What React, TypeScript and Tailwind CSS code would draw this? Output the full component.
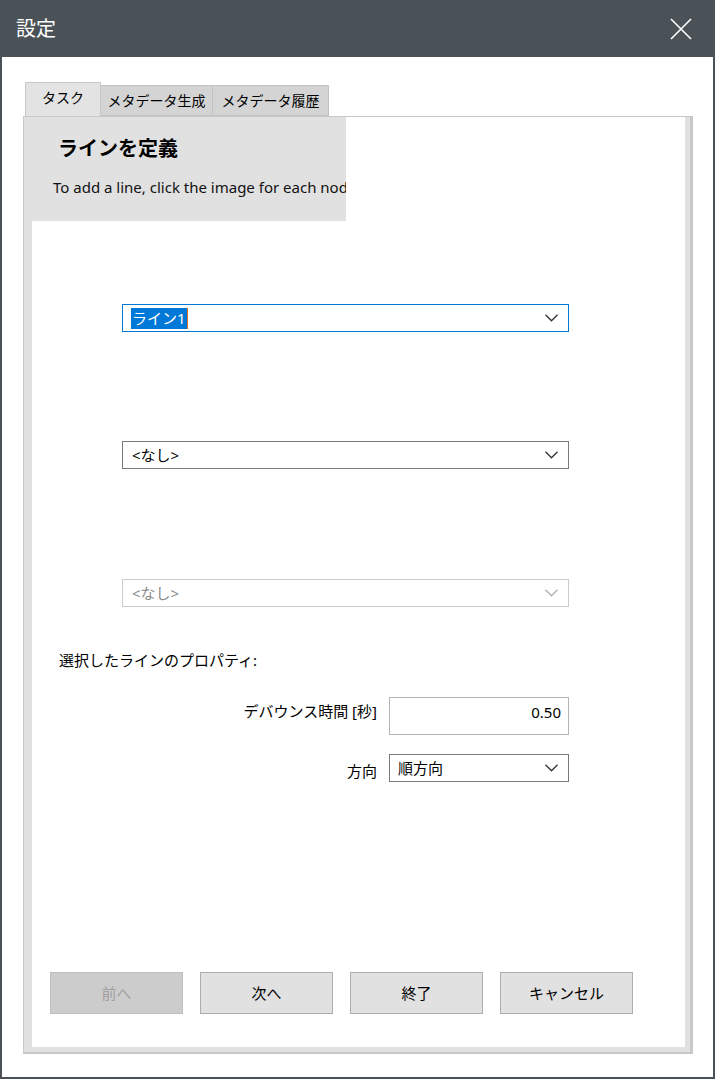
import React from "react";

const JP = { fontFamily: '"Noto Sans", "Noto Sans CJK JP", sans-serif' };

function Chevron({ color = "#333" }: { color?: string }) {
  return (
    <svg width="13" height="8" viewBox="0 0 13 8" className="shrink-0">
      <path d="M0.5 0.8 L6.5 6.8 L12.5 0.8" fill="none" stroke={color} strokeWidth="1.3" />
    </svg>
  );
}

export default function App() {
  return (
    <div
      className="w-[715px] h-[1079px] flex flex-col bg-white border-x-2 border-b-2 border-[#4a5258] text-black overflow-hidden"
      style={JP}
    >
      {/* Title bar */}
      <div className="h-[57px] shrink-0 bg-[#4a5258] flex items-center justify-between pl-[14px] pr-[21px]">
        <span className="text-white text-[20px] leading-none">設定</span>
        <svg width="22" height="22" viewBox="0 0 22 22">
          <path d="M1 1 L21 21 M21 1 L1 21" stroke="#ffffff" strokeWidth="1.6" />
        </svg>
      </div>

      {/* Tabs */}
      <div className="mt-[25px] ml-[23px] flex items-end h-[34px] shrink-0 relative z-10">
        <div className="w-[76px] h-[34px] bg-[#e3e3e3] border border-b-0 border-[#c8c8c8] flex items-center justify-center text-[14px] pb-[4px]">
          タスク
        </div>
        <div className="w-[112px] h-[31px] bg-[#d4d4d4] border border-l-0 border-[#c2c2c2] flex items-center justify-center text-[14px]">
          メタデータ生成
        </div>
        <div className="w-[116px] h-[31px] bg-[#d4d4d4] border border-l-0 border-[#c2c2c2] flex items-center justify-center text-[14px]">
          メタデータ履歴
        </div>
      </div>

      {/* Panel */}
      <div className="ml-[21px] w-[670px] h-[938px] shrink-0 border-l border-t border-r-[3px] border-b-2 border-[#c8c8c8] bg-[#e1e1e1] pl-[8px] pr-[5px] pb-[5px] flex flex-col">
        <div className="flex-1 bg-white flex flex-col">
          {/* Header */}
          <div className="-ml-[8px] w-[322px] h-[104px] bg-[#e1e1e1] overflow-hidden pt-[18px] shrink-0">
            <div className="pl-[34px] text-[20px] leading-[28px] font-bold whitespace-nowrap">ラインを定義</div>
            <div className="pl-[29px] mt-[14px] text-[15px] leading-[20px] whitespace-nowrap text-[#111]">
              To add a line, click the image for each node in order.
            </div>
          </div>

          {/* Dropdown 1 (focused) */}
          <div className="mt-[83px] ml-[90px] w-[447px] h-[28px] border border-[#0078d7] flex items-center justify-between pl-[8px] pr-[10px]">
            <span className="bg-[#0078d7] text-white text-[15px] leading-[21px] h-[21px] px-[1px] border-r border-[#e07020]">
              ライン1
            </span>
            <Chevron />
          </div>

          {/* Dropdown 2 */}
          <div className="mt-[109px] ml-[90px] w-[447px] h-[28px] border border-[#7a7a7a] flex items-center justify-between pl-[9px] pr-[10px]">
            <span className="text-[15px] leading-[21px]">&lt;なし&gt;</span>
            <Chevron />
          </div>

          {/* Dropdown 3 (disabled) */}
          <div className="mt-[110px] ml-[90px] w-[447px] h-[28px] border border-[#cccccc] flex items-center justify-between pl-[9px] pr-[10px]">
            <span className="text-[15px] leading-[21px] text-[#8a8a8a]">&lt;なし&gt;</span>
            <Chevron color="#b0b0b0" />
          </div>

          {/* Properties label */}
          <div className="mt-[43px] ml-[27px] text-[15px] leading-[20px]">選択したラインのプロパティ:</div>

          {/* Debounce row */}
          <div className="mt-[27px] flex items-start">
            <div className="w-[345px] text-right text-[15px] leading-[20px] pt-[4px]">デバウンス時間 [秒]</div>
            <div className="ml-[12px] w-[180px] h-[38px] border border-[#b4b4b4] flex items-start justify-end pr-[7px] pt-[4px] text-[15px] leading-[20px]">
              0.50
            </div>
          </div>

          {/* Direction row */}
          <div className="mt-[19px] flex items-start">
            <div className="w-[345px] text-right text-[15px] leading-[20px] pt-[7px]">方向</div>
            <div className="ml-[12px] w-[180px] h-[28px] border border-[#7a7a7a] flex items-center justify-between pl-[8px] pr-[10px]">
              <span className="text-[15px] leading-[21px]">順方向</span>
              <Chevron />
            </div>
          </div>

          {/* Buttons */}
          <div className="mt-auto mb-[33px] ml-[18px] flex gap-[17px]">
            <div className="w-[133px] h-[42px] bg-[#cccccc] border border-[#bfbfbf] flex items-center justify-center text-[15px] text-[#a0a0a0]">
              前へ
            </div>
            <div className="w-[133px] h-[42px] bg-[#e1e1e1] border border-[#adadad] flex items-center justify-center text-[15px]">
              次へ
            </div>
            <div className="w-[133px] h-[42px] bg-[#e1e1e1] border border-[#adadad] flex items-center justify-center text-[15px]">
              終了
            </div>
            <div className="w-[133px] h-[42px] bg-[#e1e1e1] border border-[#adadad] flex items-center justify-center text-[15px]">
              キャンセル
            </div>
          </div>
        </div>
      </div>
    </div>
  );
}
